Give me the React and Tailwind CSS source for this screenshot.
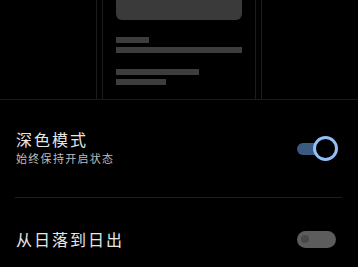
import React, { useState } from "react";

// Переключатель в стиле Android
const Toggle = ({ on }) => {
  if (on) {
    return (
      <div className="relative w-[41px] h-[25px] flex items-center">
        <div className="w-[34px] h-[12px] rounded-full bg-[#3a5a82]" />
        <div className="absolute right-0 top-0 w-[25px] h-[25px] rounded-full border-[3px] border-[#93bff5] bg-black" />
      </div>
    );
  }
  return (
    <div className="w-[39px] h-[17px] rounded-full bg-[#5c5c5c] flex items-center pl-[4px]">
      <div className="w-[8px] h-[8px] rounded-full bg-[#484848]" />
    </div>
  );
};

const App = () => {
  const [dark] = useState(true);
  const [sunset] = useState(false);

  return (
    <div
      className="w-[358px] h-[267px] bg-black overflow-hidden"
      style={{ fontFamily: '"Noto Sans CJK SC", "Noto Sans", sans-serif' }}
    >
      {/* Превью телефона */}
      <div className="h-[100px] border-b border-[#1a1a1a] flex justify-center">
        <div className="w-[166px] h-full border-x border-[#1c1c1c] px-[5px]">
          <div className="h-full border-x border-[#1c1c1c] px-[13px]">
            <div className="h-[20px] rounded-b-md bg-[#3a3a3a]" />
            <div className="mt-[17px] w-[33px] h-[6px] bg-[#3d3d3d]" />
            <div className="mt-[4px] w-[126px] h-[6px] bg-[#3d3d3d]" />
            <div className="mt-[16px] w-[83px] h-[6px] bg-[#3d3d3d]" />
            <div className="mt-[4px] w-[50px] h-[6px] bg-[#3d3d3d]" />
          </div>
        </div>
      </div>

      {/* Тёмный режим */}
      <div className="flex items-start justify-between pl-4 pr-[20px] pt-[30px]">
        <div>
          <div className="text-[16px] leading-[18px] tracking-[2px] text-[#e6e6e6]">深色模式</div>
          <div className="mt-[4px] text-[11px] leading-[13px] tracking-[1.3px] text-[#bdbdbd]">始终保持开启状态</div>
        </div>
        <div className="mt-[6px]">
          <Toggle on={dark} />
        </div>
      </div>

      <div className="mt-[32px] ml-[15px] mr-[16px] h-px bg-[#1f1f1f]" />

      {/* Расписание */}
      <div className="flex items-center justify-between pl-4 pr-[22px] pt-[32px]">
        <div className="text-[16px] leading-[18px] tracking-[2px] text-[#e6e6e6]">从日落到日出</div>
        <Toggle on={sunset} />
      </div>
    </div>
  );
};

export default App;
